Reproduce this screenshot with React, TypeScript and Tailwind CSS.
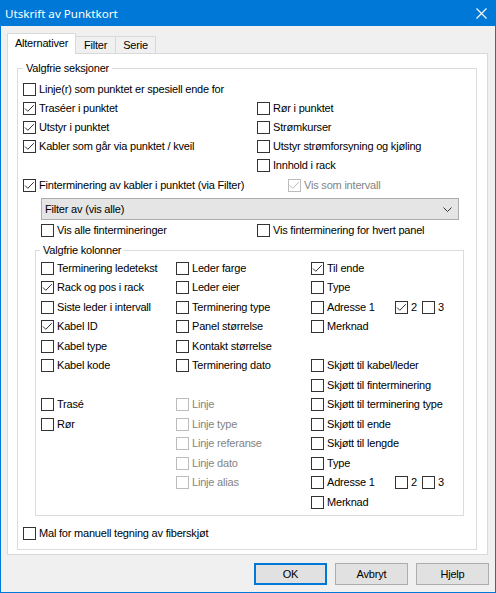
import React from "react";

type CheckProps = {
  label?: string;
  checked?: boolean;
  disabled?: boolean;
  className?: string;
};

function Box({ checked, disabled }: { checked?: boolean; disabled?: boolean }) {
  return (
    <span
      className={`flex-none w-[13px] h-[13px] border bg-white flex items-center justify-center ${
        disabled ? "border-[#bcbcbc]" : "border-[#333333]"
      }`}
    >
      {checked && (
        <svg width="11" height="11" viewBox="0 0 11 11">
          <path
            d="M1 5.5 L3.8 8.3 L9.8 2.2"
            fill="none"
            stroke={disabled ? "#bcbcbc" : "#333333"}
            strokeWidth="1"
          />
        </svg>
      )}
    </span>
  );
}

function Check({ label, checked, disabled, className = "" }: CheckProps) {
  return (
    <div className={`flex items-center h-[19px] ${className}`}>
      <Box checked={checked} disabled={disabled} />
      {label !== undefined && (
        <span className={`ml-[3px] whitespace-nowrap ${disabled ? "text-[#838383]" : "text-black"}`}>
          {label}
        </span>
      )}
    </div>
  );
}

function Row({ children }: { children?: React.ReactNode }) {
  return <div className="flex items-center h-[19.5px]">{children}</div>;
}

function RCheck({ label, checked, disabled }: CheckProps) {
  return (
    <Row>
      <Box checked={checked} disabled={disabled} />
      <span className={`ml-[3px] whitespace-nowrap ${disabled ? "text-[#838383]" : "text-black"}`}>
        {label}
      </span>
    </Row>
  );
}

function Adresse({ two }: { two?: boolean }) {
  return (
    <Row>
      <div className="flex items-center w-[84px]">
        <Box />
        <span className="ml-[3px]">Adresse 1</span>
      </div>
      <div className="flex items-center w-[27px]">
        <Box checked={two} />
        <span className="ml-[3px]">2</span>
      </div>
      <div className="flex items-center">
        <Box />
        <span className="ml-[3px]">3</span>
      </div>
    </Row>
  );
}

export default function App() {
  return (
    <div className="w-[496px] h-[593px] border border-[#0078d7] bg-[#f0f0f0] flex flex-col font-['Liberation_Sans',Arial,sans-serif] text-[11px] leading-[13px] tracking-[-0.2px] text-black overflow-hidden">
      {/* Title bar */}
      <div className="h-[25px] bg-[#0078d7] flex items-center justify-between pl-[4px] flex-none">
        <span className="text-white text-[11.6px] tracking-normal font-['Noto_Sans',sans-serif] leading-none">
          Utskrift av Punktkort
        </span>
        <svg width="11" height="11" viewBox="0 0 11 11" className="mr-[8px]">
          <path d="M0.5 0.5 L10.5 10.5 M10.5 0.5 L0.5 10.5" stroke="#ffffff" strokeWidth="1.1" />
        </svg>
      </div>

      {/* Tabs */}
      <div className="mt-[7px] h-[21px] flex items-end pl-[6px] -mb-px relative z-10 flex-none">
        <div className="w-[69px] h-[21px] bg-white border border-[#d9d9d9] border-b-0 flex items-center justify-center pb-[1px]">
          Alternativer
        </div>
        <div className="w-[40px] h-[18px] border border-[#d9d9d9] border-l-0 border-b-0 flex items-center justify-center">
          Filter
        </div>
        <div className="w-[40px] h-[18px] border border-[#d9d9d9] border-l-0 border-b-0 flex items-center justify-center">
          Serie
        </div>
      </div>

      {/* Panel */}
      <div className="ml-[6px] w-[481px] h-[502px] bg-white border border-[#d9d9d9] flex-none pt-[14px] pl-[9px]">
        {/* Group: Valgfrie seksjoner */}
        <div className="relative w-[460px] h-[482px] border border-[#dcdcdc] pl-[5px]">
          <span className="absolute left-[5px] -top-[7px] bg-white px-[3px] leading-[13px]">
            Valgfrie seksjoner
          </span>

          <div className="mt-[11px] grid grid-cols-[234px_1fr]">
            <div className="flex flex-col">
              <Check label="Linje(r) som punktet er spesiell ende for" />
              <Check label="Traséer i punktet" checked />
              <Check label="Utstyr i punktet" checked />
              <Check label="Kabler som går via punktet / kveil" checked />
              <div className="h-[19px]" />
            </div>
            <div className="flex flex-col">
              <div className="h-[19px]" />
              <Check label="Rør i punktet" />
              <Check label="Strømkurser" />
              <Check label="Utstyr strømforsyning og kjøling" />
              <Check label="Innhold i rack" />
            </div>
          </div>

          <div className="mt-[1px] flex items-center">
            <Check label="Finterminering av kabler i punktet (via Filter)" checked className="w-[265px]" />
            <Check label="Vis som intervall" checked disabled />
          </div>

          {/* Dropdown */}
          <div className="mt-[3px] ml-[18px] w-[418px] h-[22px] bg-[#e5e5e5] border border-[#acacac] flex items-center justify-between pl-[3px] pr-[6px]">
            <span>Filter av (vis alle)</span>
            <svg width="9" height="5" viewBox="0 0 9 5">
              <path d="M0.5 0.5 L4.5 4.5 L8.5 0.5" fill="none" stroke="#333333" strokeWidth="1" />
            </svg>
          </div>

          <div className="mt-[1px] ml-[18px] grid grid-cols-[216px_1fr]">
            <Check label="Vis alle fintermineringer" />
            <Check label="Vis finterminering for hvert panel" />
          </div>

          {/* Group: Valgfrie kolonner */}
          <div className="relative mt-[10px] ml-[12px] w-[429px] h-[266px] border border-[#dcdcdc] pl-[5px]">
            <span className="absolute left-[4px] -top-[7px] bg-white px-[3px] leading-[13px]">
              Valgfrie kolonner
            </span>
            <div className="mt-[7.5px] grid grid-cols-[135px_135px_1fr]">
              <div className="flex flex-col">
                <RCheck label="Terminering ledetekst" />
                <RCheck label="Rack og pos i rack" checked />
                <RCheck label="Siste leder i intervall" />
                <RCheck label="Kabel ID" checked />
                <RCheck label="Kabel type" />
                <RCheck label="Kabel kode" />
                <Row />
                <RCheck label="Trasé" />
                <RCheck label="Rør" />
              </div>
              <div className="flex flex-col">
                <RCheck label="Leder farge" />
                <RCheck label="Leder eier" />
                <RCheck label="Terminering type" />
                <RCheck label="Panel størrelse" />
                <RCheck label="Kontakt størrelse" />
                <RCheck label="Terminering dato" />
                <Row />
                <RCheck label="Linje" disabled />
                <RCheck label="Linje type" disabled />
                <RCheck label="Linje referanse" disabled />
                <RCheck label="Linje dato" disabled />
                <RCheck label="Linje alias" disabled />
              </div>
              <div className="flex flex-col">
                <RCheck label="Til ende" checked />
                <RCheck label="Type" />
                <Adresse two />
                <RCheck label="Merknad" />
                <Row />
                <RCheck label="Skjøtt til kabel/leder" />
                <RCheck label="Skjøtt til finterminering" />
                <RCheck label="Skjøtt til terminering type" />
                <RCheck label="Skjøtt til ende" />
                <RCheck label="Skjøtt til lengde" />
                <RCheck label="Type" />
                <Adresse />
                <RCheck label="Merknad" />
              </div>
            </div>
          </div>

          <Check label="Mal for manuell tegning av fiberskjøt" className="mt-[8px]" />
        </div>
      </div>

      {/* Buttons */}
      <div className="mt-[8px] flex justify-end gap-[8px] pr-[6px] flex-none">
        <button className="w-[73px] h-[22px] bg-[#e1e1e1] border-2 border-[#0078d7] flex items-center justify-center">
          OK
        </button>
        <button className="w-[73px] h-[22px] bg-[#e1e1e1] border border-[#adadad] flex items-center justify-center">
          Avbryt
        </button>
        <button className="w-[73px] h-[22px] bg-[#e1e1e1] border border-[#adadad] flex items-center justify-center">
          Hjelp
        </button>
      </div>
    </div>
  );
}
